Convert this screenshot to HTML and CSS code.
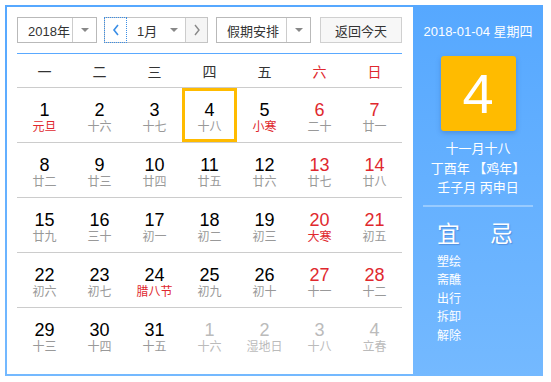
FILE: index.html
```html
<!doctype html>
<html>

<head>
	<meta charset="utf-8">
	<title>万年历</title>
	<link rel="stylesheet" href="styles.css">
</head>

<body>
	<div class="calendar">
		<div class="main">
			<div class="toolbar">
				<div class="select year">
					<span class="label">2018年</span>
					<span class="arrow"><i></i></span>
				</div>
				<div class="month-group">
					<div class="nav prev">
						<svg width="8" height="12" viewBox="0 0 8 12"><polyline points="6,1 2,6 6,11" fill="none" stroke="#3a8ee6" stroke-width="1.6"/></svg>
					</div>
					<div class="month">
						<span class="label">1月</span>
						<span class="arrow"><i></i></span>
					</div>
					<div class="nav next">
						<svg width="8" height="12" viewBox="0 0 8 12"><polyline points="2,1 6,6 2,11" fill="none" stroke="#888" stroke-width="1.4"/></svg>
					</div>
				</div>
				<div class="select holiday">
					<span class="label">假期安排</span>
					<span class="arrow"><i></i></span>
				</div>
				<div class="today-btn">返回今天</div>
			</div>

			<div class="weekdays">
				<div>一</div>
				<div>二</div>
				<div>三</div>
				<div>四</div>
				<div>五</div>
				<div class="weekend">六</div>
				<div class="weekend">日</div>
			</div>

			<div class="days">
				<div class="day"><b>1</b><span class="fest">元旦</span></div>
				<div class="day"><b>2</b><span>十六</span></div>
				<div class="day"><b>3</b><span>十七</span></div>
				<div class="day selected"><b>4</b><span>十八</span></div>
				<div class="day"><b>5</b><span class="fest">小寒</span></div>
				<div class="day weekend"><b>6</b><span>二十</span></div>
				<div class="day weekend"><b>7</b><span>廿一</span></div>

				<div class="day"><b>8</b><span>廿二</span></div>
				<div class="day"><b>9</b><span>廿三</span></div>
				<div class="day"><b>10</b><span>廿四</span></div>
				<div class="day"><b>11</b><span>廿五</span></div>
				<div class="day"><b>12</b><span>廿六</span></div>
				<div class="day weekend"><b>13</b><span>廿七</span></div>
				<div class="day weekend"><b>14</b><span>廿八</span></div>

				<div class="day"><b>15</b><span>廿九</span></div>
				<div class="day"><b>16</b><span>三十</span></div>
				<div class="day"><b>17</b><span>初一</span></div>
				<div class="day"><b>18</b><span>初二</span></div>
				<div class="day"><b>19</b><span>初三</span></div>
				<div class="day weekend"><b>20</b><span class="fest">大寒</span></div>
				<div class="day weekend"><b>21</b><span>初五</span></div>

				<div class="day"><b>22</b><span>初六</span></div>
				<div class="day"><b>23</b><span>初七</span></div>
				<div class="day"><b>24</b><span class="fest">腊八节</span></div>
				<div class="day"><b>25</b><span>初九</span></div>
				<div class="day"><b>26</b><span>初十</span></div>
				<div class="day weekend"><b>27</b><span>十一</span></div>
				<div class="day weekend"><b>28</b><span>十二</span></div>

				<div class="day last"><b>29</b><span>十三</span></div>
				<div class="day last"><b>30</b><span>十四</span></div>
				<div class="day last"><b>31</b><span>十五</span></div>
				<div class="day last other"><b>1</b><span>十六</span></div>
				<div class="day last other"><b>2</b><span>湿地日</span></div>
				<div class="day last other"><b>3</b><span>十八</span></div>
				<div class="day last other"><b>4</b><span>立春</span></div>
			</div>
		</div>

		<div class="side">
			<div class="side-date">2018-01-04 星期四</div>
			<div class="big-day">4</div>
			<div class="lunar">
				<div>十一月十八</div>
				<div>丁酉年 【鸡年】</div>
				<div>壬子月 丙申日</div>
			</div>
			<div class="sep"></div>
			<div class="almanac">
				<div class="col">
					<div class="head">宜</div>
					<div class="item">塑绘</div>
					<div class="item">斋醮</div>
					<div class="item">出行</div>
					<div class="item">拆卸</div>
					<div class="item">解除</div>
				</div>
				<div class="col">
					<div class="head">忌</div>
				</div>
			</div>
		</div>
	</div>
</body>

</html>
```

FILE: styles.css
```css
* {
	box-sizing: border-box;
	font-family: "Liberation Sans", Arial, "Noto Sans CJK SC", sans-serif;
}

body {
	margin: 0;
	background: #fff;
}

.calendar {
	margin: 5px;
	width: 538px;
	height: 371px;
	display: flex;
	padding: 2px 0 2px 2px;
	background: linear-gradient(#56a8ff, #74b9ff);
}

/* left: month grid */

.main {
	width: 406px;
	background: #fff;
	padding: 10px 11px 0 10px;
}

.toolbar {
	display: flex;
	height: 26px;
	margin-bottom: 10px;
	font-size: 13px;
	color: #333;
}

.select,
.month-group,
.today-btn {
	display: flex;
	align-items: center;
	height: 26px;
	border: 1px solid #b9b9b9;
}

.select .label {
	flex: 1;
	padding-left: 10px;
}

.select .arrow {
	width: 24px;
	height: 100%;
	border-left: 1px solid #ccc;
	display: flex;
	align-items: center;
	justify-content: center;
}

.arrow i {
	width: 0;
	height: 0;
	border-left: 4px solid transparent;
	border-right: 4px solid transparent;
	border-top: 4px solid #888;
}

.year {
	width: 80px;
	margin-right: 7px;
}

.holiday {
	width: 95px;
	margin-right: 9px;
}

.month-group {
	width: 104px;
	margin-right: 8px;
	border-color: #c4c4c4;
}

.nav {
	height: 100%;
	display: flex;
	align-items: center;
	justify-content: center;
}

.prev {
	width: 23px;
	margin: -1px 0 -1px -1px;
	height: 26px;
	border: 1px dotted #3a8ee6;
}

.next {
	width: 22px;
	background: #f5f5f5;
	border-left: 1px solid #ccc;
}

.month {
	flex: 1;
	display: flex;
	align-items: center;
	height: 100%;
}

.month .label {
	flex: 1;
	padding-left: 10px;
}

.month .arrow {
	width: 22px;
	display: flex;
	justify-content: center;
}

.today-btn {
	width: 82px;
	justify-content: center;
	background: #f7f7f7;
	border-color: #d0d0d0;
}

.weekdays {
	display: grid;
	grid-template-columns: repeat(7, 55px);
	height: 35px;
	border-top: 1px solid #5aa9ff;
	border-bottom: 1px solid #ccc;
	font-size: 14px;
	color: #333;
}

.weekdays div {
	display: flex;
	align-items: center;
	justify-content: center;
}

.weekdays .weekend {
	color: #e0282e;
}

.days {
	display: grid;
	grid-template-columns: repeat(7, 55px);
	grid-auto-rows: 55px;
}

.day {
	display: flex;
	flex-direction: column;
	align-items: center;
	padding-top: 12px;
	border-bottom: 1px solid #ccc;
}

.day.last {
	border-bottom: none;
}

.day b {
	font-weight: normal;
	font-size: 18px;
	line-height: 20px;
	color: #000;
}

.day span {
	font-size: 12px;
	line-height: 14px;
	color: #999;
}

.day.weekend b {
	color: #e0282e;
}

.day span.fest {
	color: #e0282e;
}

.day.other b,
.day.other span {
	color: #bbb;
}

.day.selected {
	box-shadow: inset 0 0 0 3px #ffbb00;
}

/* right: today detail */

.side {
	width: 130px;
	color: #fff;
	text-align: center;
	padding-top: 16px;
}

.side-date {
	font-size: 13px;
	line-height: 18px;
}

.big-day {
	width: 75px;
	height: 75px;
	margin: 15px auto 0;
	background: #ffbb00;
	border-radius: 3px;
	box-shadow: 0 2px 5px rgba(40, 90, 160, 0.35);
	font-size: 56px;
	line-height: 75px;
}

.lunar {
	margin-top: 8px;
	font-size: 13px;
	line-height: 19.5px;
}

.sep {
	height: 2px;
	margin: 7px 10px 0;
	background: #98cbff;
}

.almanac {
	display: flex;
	padding-left: 24px;
	margin-top: 14px;
}

.almanac .col {
	width: 55px;
	text-align: left;
}

.almanac .head {
	font-size: 23px;
	line-height: 26px;
	margin-bottom: 6px;
	text-shadow: 1px 1px 1px rgba(40, 80, 160, 0.35);
}

.almanac .item {
	font-size: 12px;
	line-height: 18.5px;
}
```
